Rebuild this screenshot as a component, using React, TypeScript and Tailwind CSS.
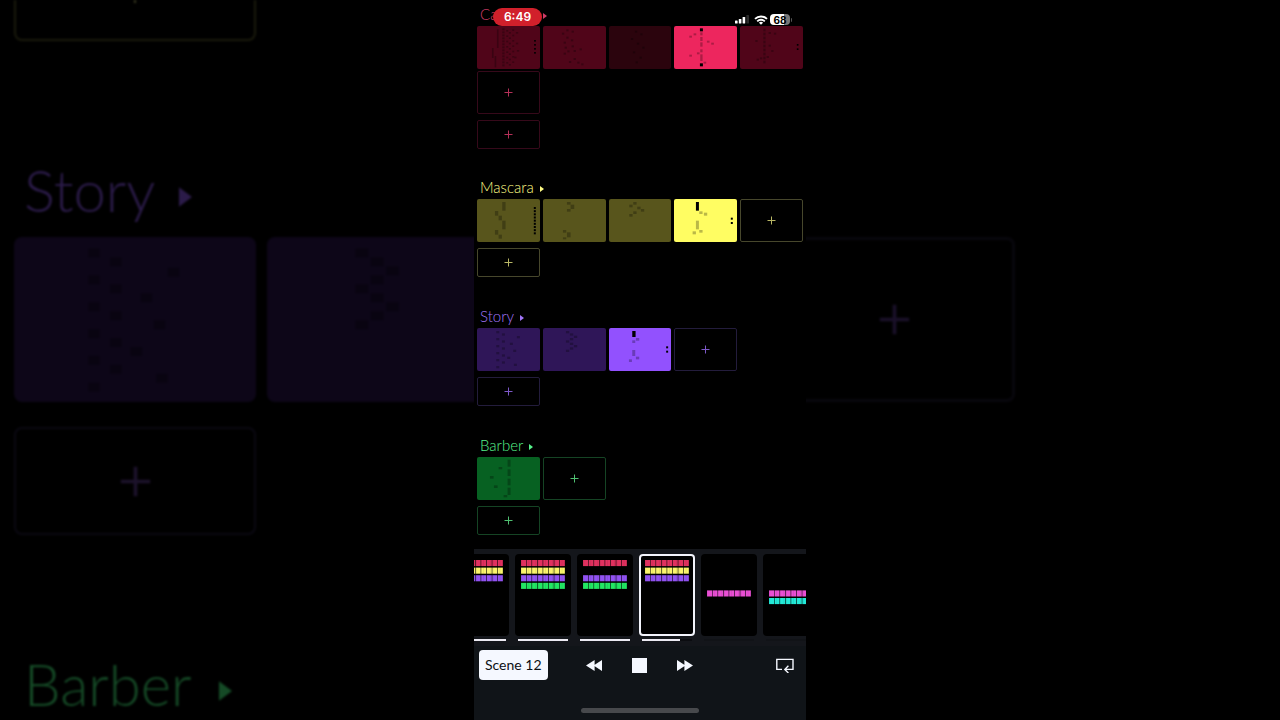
import React from "react";

type Rect = [number, number, number, number];

type Clip = {
  fill: string;
  marks: Rect[];
  solid?: Rect[];
  label: string;
};

type Track = {
  name: string;
  title: string;
  plus: string;
  border: string;
  clips: Clip[];
  addBeside: boolean;
  extraRow: boolean;
  spacing: string;
};

/* Note patterns use a grid of 189 x 129 units per clip. */
const boxes = (points: [number, number][], w: number, h: number): Rect[] =>
  points.map(([x, y]): Rect => [x, y, w, h]);

const column = (x: number, from: number, step: number, count: number, w: number, h: number): Rect[] =>
  Array.from({ length: count }, (_, i): Rect => [x, from + i * step, w, h]);

const storyOne: Rect[] = [
  ...column(58, 9, 21, 6, 9, 7),
  ...column(75, 16, 21, 5, 9, 7),
  ...boxes([[120, 24], [99, 44], [109, 65], [91, 86], [111, 107]], 9, 7),
];

const storyTwo: Rect[] = boxes(
  [[69, 9], [81, 16], [93, 23], [81, 30], [69, 37], [81, 44], [93, 51], [81, 58], [69, 65]],
  10,
  7,
);

const tracks: Track[] = [
  {
    name: "Ca",
    title: "text-[#cf3c66]",
    plus: "text-[#b53058]",
    border: "border-[#36091a]",
    addBeside: false,
    extraRow: true,
    spacing: "pb-[26px]",
    clips: [
      {
        label: "Clip 1",
        fill: "bg-[#500519]",
        marks: [
          [60, 10, 5, 56], [45, 66, 5, 30], [53, 90, 5, 34],
          ...column(76, 7, 9, 13, 7, 6),
          ...column(88, 12, 16, 7, 6, 5),
          ...column(96, 18, 16, 7, 6, 5),
          ...column(106, 10, 16, 7, 6, 5),
          ...boxes([[117, 18], [117, 50], [120, 72], [112, 92]], 7, 5),
        ],
        solid: column(172, 42, 12, 4, 5, 5),
      },
      {
        label: "Clip 2",
        fill: "bg-[#500519]",
        marks: boxes(
          [[70, 10], [86, 14], [57, 20], [70, 32], [84, 40], [62, 47], [86, 58], [65, 62], [73, 73], [92, 72], [110, 67], [62, 80], [78, 105], [92, 96], [103, 107], [115, 112]],
          7,
          6,
        ),
      },
      {
        label: "Clip 3",
        fill: "bg-[#2b040d]",
        marks: boxes([[78, 14], [94, 22], [66, 36], [84, 50], [100, 62], [72, 76], [92, 92], [80, 106]], 7, 6),
      },
      {
        label: "Clip 4",
        fill: "bg-[#ed265e]",
        marks: [
          [79, 19, 7, 9], [79, 33, 7, 12], [79, 49, 7, 13], [79, 70, 7, 9], [79, 85, 7, 20],
          ...boxes([[59, 22], [46, 29], [99, 44], [112, 50], [69, 79], [46, 86], [89, 107]], 8, 6),
        ],
        solid: [[78, 7, 9, 9], [78, 112, 9, 9]],
      },
      {
        label: "Clip 5",
        fill: "bg-[#500519]",
        marks: [
          ...column(70, 8, 12, 9, 7, 8),
          ...boxes([[86, 18], [102, 20], [46, 42], [86, 56], [94, 72], [60, 94], [50, 98], [80, 90]], 7, 6),
        ],
        solid: column(171, 54, 13, 2, 5, 5),
      },
    ],
  },
  {
    name: "Mascara",
    title: "text-[#fffc85]",
    plus: "text-[#b9b765]",
    border: "border-[#47472c]",
    addBeside: true,
    extraRow: false,
    spacing: "pb-[27px]",
    clips: [
      {
        label: "Clip 1",
        fill: "bg-[#58551c]",
        marks: [[76, 9, 10, 26], [54, 36, 10, 14], [65, 50, 10, 14], [76, 65, 10, 26], [54, 93, 10, 14], [65, 107, 10, 12]],
        solid: column(171, 24, 9.5, 9, 6, 6),
      },
      {
        label: "Clip 2",
        fill: "bg-[#58551c]",
        marks: [[72, 9, 11, 8], [83, 17, 11, 13], [72, 30, 11, 8], [60, 93, 10, 8], [72, 100, 11, 15], [60, 115, 10, 6]],
      },
      {
        label: "Clip 3",
        fill: "bg-[#58551c]",
        marks: boxes([[73, 9], [61, 17], [85, 23], [96, 30], [73, 37], [61, 45]], 10, 8),
      },
      {
        label: "Clip 4",
        fill: "bg-[#fffd62]",
        marks: [[76, 37, 10, 8], [90, 41, 10, 9], [66, 65, 9, 26], [76, 93, 10, 8], [56, 97, 10, 9]],
        solid: [[66, 9, 9, 26], [171, 56, 6, 6], [171, 69, 6, 6]],
      },
    ],
  },
  {
    name: "Story",
    title: "text-[#a276f8]",
    plus: "text-[#7d58c8]",
    border: "border-[#231c3c]",
    addBeside: true,
    extraRow: false,
    spacing: "pb-[27px]",
    clips: [
      { label: "Clip 1", fill: "bg-[#2f1658]", marks: storyOne },
      { label: "Clip 2", fill: "bg-[#2f1658]", marks: storyTwo },
      {
        label: "Clip 3",
        fill: "bg-[#9251fe]",
        marks: [[70, 37, 9, 8], [81, 30, 10, 8], [70, 66, 9, 18], [81, 86, 10, 8], [60, 94, 9, 8]],
        solid: [[70, 9, 10, 18], [172, 55, 6, 6], [172, 68, 6, 6]],
      },
    ],
  },
  {
    name: "Barber",
    title: "text-[#56f28b]",
    plus: "text-[#4fc071]",
    border: "border-[#154424]",
    addBeside: true,
    extraRow: false,
    spacing: "pb-[14px]",
    clips: [
      {
        label: "Clip 1",
        fill: "bg-[#076122]",
        marks: [[92, 8, 9, 21], [92, 37, 9, 20], [92, 65, 9, 20], [92, 92, 9, 22], [65, 30, 11, 7], [39, 57, 11, 8], [51, 85, 11, 8], [80, 114, 11, 7]],
      },
    ],
  },
];

const RED = "#e0315f";
const YELLOW = "#fbf56c";
const PURPLE = "#9152f2";
const GREEN = "#22e763";
const PINK = "#e94fd4";
const CYAN = "#23ead8";

type Scene = { name: string; rows: [number, string][]; progress: number; active?: boolean };

const scenes: Scene[] = [
  { name: "Scene 9", rows: [[0, RED], [1, YELLOW], [2, PURPLE]], progress: 100 },
  { name: "Scene 10", rows: [[0, RED], [1, YELLOW], [2, PURPLE], [3, GREEN]], progress: 100 },
  { name: "Scene 11", rows: [[0, RED], [2, PURPLE], [3, GREEN]], progress: 100 },
  { name: "Scene 12", rows: [[0, RED], [1, YELLOW], [2, PURPLE]], progress: 75, active: true },
  { name: "Scene 13", rows: [[4, PINK]], progress: 0 },
  { name: "Scene 14", rows: [[4, PINK], [5, CYAN]], progress: 0 },
];

function Pattern({ marks, solid = [] }: { marks: Rect[]; solid?: Rect[] }) {
  return (
    <svg viewBox="0 0 189 129" preserveAspectRatio="none" className="block h-full w-full" aria-hidden="true">
      {marks.map(([x, y, w, h], i) => (
        <rect key={i} x={x} y={y} width={w} height={h} fill="#000" fillOpacity="0.27" />
      ))}
      {solid.map(([x, y, w, h], i) => (
        <rect key={i} x={x} y={y} width={w} height={h} fill="#000" />
      ))}
    </svg>
  );
}

function Plus({ size }: { size: string }) {
  return (
    <svg viewBox="0 0 9 9" className={size} aria-hidden="true">
      <path d="M4.5 0.5v8M0.5 4.5h8" stroke="currentColor" strokeWidth="1" fill="none" />
    </svg>
  );
}

function Arrow({ size }: { size: string }) {
  return (
    <svg viewBox="0 0 4 6" className={size} aria-hidden="true">
      <path d="M0 0l4 3-4 3z" fill="currentColor" />
    </svg>
  );
}

function AddButton({ track, height }: { track: Track; height: string }) {
  return (
    <button
      type="button"
      aria-label={`Add to ${track.name}`}
      className={`flex items-center justify-center rounded-[2px] border ${height} ${track.border} ${track.plus}`}
    >
      <Plus size="size-[9px]" />
    </button>
  );
}

function TrackSection({ track }: { track: Track }) {
  return (
    <section className={track.spacing}>
      <h2>
        <button type="button" className={`flex h-6 items-center gap-1.5 pl-[3px] text-[15px] leading-6 ${track.title}`}>
          <span className={track.extraRow ? "w-[57px] text-left" : ""}>{track.name}</span>
          <Arrow size="mt-1 h-1.5 w-1" />
        </button>
      </h2>
      <div className="grid grid-cols-5 gap-x-[3px] gap-y-0.5">
        {track.clips.map((clip) => (
          <button
            key={clip.label}
            type="button"
            aria-label={`${track.name} ${clip.label}`}
            className={`h-[43px] overflow-hidden rounded-[2px] ${clip.fill}`}
          >
            <Pattern marks={clip.marks} solid={clip.solid} />
          </button>
        ))}
        {(track.addBeside || track.extraRow) && <AddButton track={track} height="h-[43px]" />}
      </div>
      <div className="grid grid-cols-5 gap-x-[3px] pt-1.5">
        <AddButton track={track} height="h-[29px]" />
      </div>
    </section>
  );
}

function StatusBar() {
  return (
    <div className="absolute inset-x-0 top-2 flex items-start justify-between pr-3.5 pl-[19px]">
      <span className="flex h-[18px] w-[49px] items-center justify-center rounded-full bg-[#d1202b] font-['Inter'] text-[12px] font-semibold text-white">
        6:49
      </span>
      <div className="flex items-center gap-[5px] pt-1.5">
        <svg viewBox="0 0 14 9" className="h-[9px] w-3.5" aria-hidden="true">
          <rect x="0" y="5.4" width="2.6" height="3.2" rx="0.6" fill="#fff" />
          <rect x="3.8" y="4" width="2.6" height="4.6" rx="0.6" fill="#fff" />
          <rect x="7.6" y="2" width="2.6" height="6.6" rx="0.6" fill="#fff" />
          <rect x="11.4" y="0" width="2.6" height="8.6" rx="0.6" fill="#2c2c2c" />
        </svg>
        <svg viewBox="0 0 14 10" className="h-2.5 w-3.5" aria-hidden="true">
          <path d="M1 3.9a8.6 8.6 0 0 1 12 0" stroke="#fff" strokeWidth="1.9" fill="none" />
          <path d="M3.2 6.3a5.4 5.4 0 0 1 7.6 0" stroke="#fff" strokeWidth="1.8" fill="none" />
          <path d="M7 9.8L4.9 7.8a3 3 0 0 1 4.2 0z" fill="#fff" />
        </svg>
        <div className="-ml-[3px] flex items-center gap-px">
          <span className="flex h-[11px] w-5 items-center justify-center rounded-[4px] bg-linear-to-r from-white from-70% to-[#777777] to-70% font-['Inter'] text-[10px] leading-none font-bold text-black">
            68
          </span>
          <span className="h-1 w-px rounded-r-full bg-[#555555]" />
        </div>
      </div>
    </div>
  );
}

function SceneThumb({ scene }: { scene: Scene }) {
  return (
    <li className="w-14 shrink-0">
      <button
        type="button"
        aria-label={scene.name}
        aria-pressed={Boolean(scene.active)}
        className={`block h-[82px] w-full overflow-hidden rounded-[4px] bg-black ${scene.active ? "ring-2 ring-[#f3f4fc] ring-inset" : ""}`}
      >
        <svg viewBox="0 0 56 82" className="block h-full w-full" aria-hidden="true">
          {scene.rows.map(([row, color]) => (
            <g key={row} transform={`translate(6 ${6 + row * 7.6})`}>
              {Array.from({ length: 8 }, (_, i) => (
                <g key={i}>
                  <rect x={i * 5.55} y="0" width="5" height="6.1" fill={color} />
                  <rect x={i * 5.55 + 0.3 + (i % 3) * 1.5} y="0" width="0.8" height="6.1" fill="#000" fillOpacity="0.08" />
                </g>
              ))}
            </g>
          ))}
        </svg>
      </button>
      <div className={`mx-[3px] mt-[3px] h-0.5 ${scene.active ? "bg-[#0b0c10]" : "bg-[#111317]"}`}>
        <div className="h-full bg-[#eceaf2]" style={{ width: `${scene.progress}%` }} />
      </div>
    </li>
  );
}

function Transport() {
  return (
    <div className="grid grid-cols-3 items-center bg-[#101418] px-[5px] pt-1">
      <button
        type="button"
        className="h-[30px] justify-self-start rounded-[4px] bg-[#f5f8ff] px-1.5 text-[14px] leading-[30px] whitespace-nowrap text-[#0d1014]"
      >
        Scene 12
      </button>
      <div className="flex items-center justify-center gap-[30px] text-[#f5f8ff]">
        <button type="button" aria-label="Previous scene">
          <svg viewBox="0 0 16 11" className="block h-[11px] w-4" aria-hidden="true">
            <path d="M8.6 0v11L0 5.5zM16 0v11L7.6 5.5z" fill="currentColor" />
          </svg>
        </button>
        <button type="button" aria-label="Stop" className="size-[15px] bg-[#f5f8ff]" />
        <button type="button" aria-label="Next scene">
          <svg viewBox="0 0 16 11" className="block h-[11px] w-4" aria-hidden="true">
            <path d="M0 0v11l8.4-5.5zM7.4 0v11L16 5.5z" fill="currentColor" />
          </svg>
        </button>
      </div>
      <button type="button" aria-label="Loop" className="mr-[7px] justify-self-end text-[#f5f8ff]">
        <svg viewBox="0 0 18 15" className="block h-[15px] w-[18px]" aria-hidden="true">
          <path
            d="M6 11.4H0.8V1.4H17V11.4H9.2M12.4 7.8L8.8 11.4L12.4 15"
            fill="none"
            stroke="currentColor"
            strokeWidth="1.4"
          />
        </svg>
      </button>
    </div>
  );
}

/* Enlarged, dimmed echo of the session that fills the area behind the panel. */
function Backdrop() {
  return (
    <div className="absolute inset-0 overflow-hidden pl-3.5 blur-[1px]" aria-hidden="true">
      <div className="flex h-[41px] w-[242px] justify-center rounded-b-[8px] border-2 border-t-0 border-[#1a1a0c]">
        <div className="h-[3px] w-0.5 bg-[#3a3a20]" />
      </div>
      <div className="mt-[104px] flex h-[92px] items-center gap-6 pb-1 pl-2.5 text-[58px] text-[#2b1b49]">
        <span>Story</span>
        <Arrow size="mt-4 h-[22px] w-[13px]" />
      </div>
      <div className="flex gap-[11px]">
        <div className="h-[165px] w-[242px] shrink-0 rounded-[8px] bg-[#0d0618]">
          <Pattern marks={storyOne} />
        </div>
        <div className="h-[165px] w-[242px] shrink-0 rounded-[8px] bg-[#0d0618]">
          <Pattern marks={storyTwo} />
        </div>
        <div className="h-[165px] w-[242px] shrink-0 rounded-[8px] bg-[#0d0618]" />
        <div className="flex h-[165px] w-[242px] shrink-0 items-center justify-center rounded-[8px] border-[3px] border-[#08070d] text-[#1a1029]">
          <Plus size="size-[33px]" />
        </div>
      </div>
      <div className="mt-[25px] flex h-[108px] w-[242px] items-center justify-center rounded-[8px] border-2 border-[#0b0912] text-[#1c122b]">
        <Plus size="size-[33px]" />
      </div>
      <div className="mt-[104px] flex h-[92px] items-center gap-7 pb-1 pl-2.5 text-[58px] text-[#154a26]">
        <span>Barber</span>
        <Arrow size="mt-4 h-[22px] w-[13px]" />
      </div>
    </div>
  );
}

export default function App() {
  return (
    <div className="relative flex min-h-screen justify-center overflow-hidden bg-black font-['Lato',sans-serif] font-light antialiased">
      <Backdrop />
      <main className="relative flex w-full max-w-[332px] flex-col bg-black">
        <div className="flex-1 px-[3px] pt-0.5">
          {tracks.map((track) => (
            <TrackSection key={track.name} track={track} />
          ))}
        </div>
        <footer className="bg-[#101418] font-normal">
          <div className="overflow-hidden bg-[#14161b] pt-[5px] pb-[5px]">
            <ul className="-ml-[21px] flex gap-1.5">
              {scenes.map((scene) => (
                <SceneThumb key={scene.name} scene={scene} />
              ))}
            </ul>
          </div>
          <Transport />
          <div className="flex justify-center pt-7 pb-[7px]">
            <div className="h-[5px] w-[118px] rounded-full bg-[#47494c]" />
          </div>
        </footer>
        <StatusBar />
      </main>
    </div>
  );
}
